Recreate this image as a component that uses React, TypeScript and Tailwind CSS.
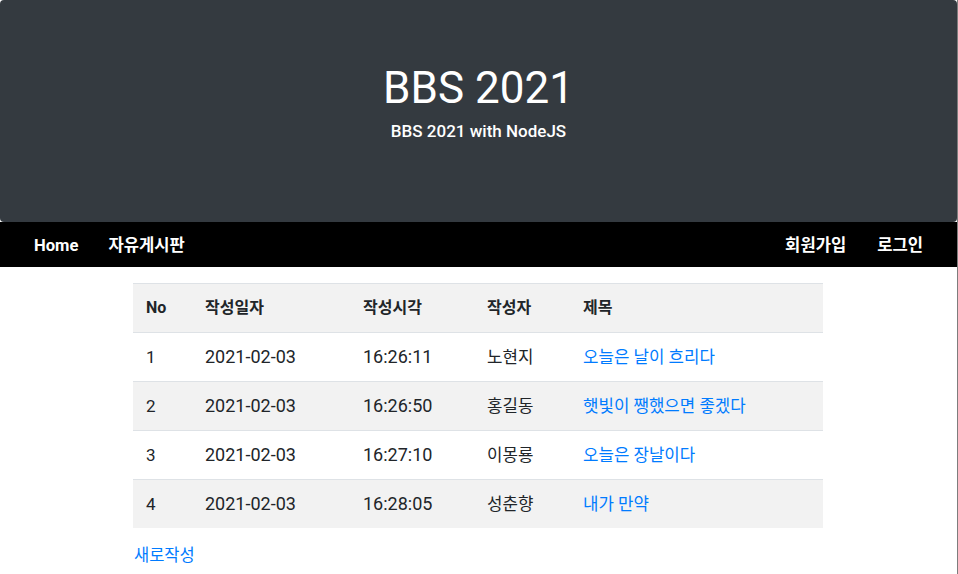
const posts = [
  { no: 1, date: "2021-02-03", time: "16:26:11", writer: "노현지", title: "오늘은 날이 흐리다" },
  { no: 2, date: "2021-02-03", time: "16:26:50", writer: "홍길동", title: "햇빛이 쨍했으면 좋겠다" },
  { no: 3, date: "2021-02-03", time: "16:27:10", writer: "이몽룡", title: "오늘은 장날이다" },
  { no: 4, date: "2021-02-03", time: "16:28:05", writer: "성춘향", title: "내가 만약" },
];

const font = { fontFamily: 'Roboto, "Noto Sans CJK KR", sans-serif' };

export default function App() {
  return (
    <div className="w-[958px] min-h-[574px] bg-white border-r border-[#7d7d7d] text-[#212529]" style={font}>
      {/* Jumbotron */}
      <header className="h-[222px] bg-[#343a40] rounded-[4px] flex flex-col items-center justify-center text-white pb-[18px]">
        <h1 className="text-[44px] leading-[52px] font-normal">BBS 2021</h1>
        <p className="text-[17px] leading-[24px] font-medium mt-[5px]">BBS 2021 with NodeJS</p>
      </header>

      {/* Nav */}
      <nav className="h-[45px] bg-black flex items-center justify-between pl-[34px] pr-[34px] pt-[3px] text-white text-[16.6px] font-bold">
        <div className="flex gap-[30px]">
          <a>Home</a>
          <a>자유게시판</a>
        </div>
        <div className="flex gap-[31px]">
          <a>회원가입</a>
          <a>로그인</a>
        </div>
      </nav>

      {/* Board */}
      <main className="w-[690px] ml-[133px] pt-[16px]">
        <table className="w-full border-collapse text-[16px] leading-[24px]">
          <thead>
            <tr className="bg-[#f2f2f2] border-t border-[#dee2e6] text-left">
              <th className="w-[59px] pl-[13px] py-[12px] font-bold">No</th>
              <th className="w-[158px] pl-[13px] py-[12px] font-bold">작성일자</th>
              <th className="w-[124px] pl-[13px] py-[12px] font-bold">작성시각</th>
              <th className="w-[96px] pl-[13px] py-[12px] font-bold">작성자</th>
              <th className="pl-[13px] py-[12px] font-bold">제목</th>
            </tr>
          </thead>
          <tbody>
            {posts.map((p, i) => (
              <tr key={p.no} className={`border-t border-[#dee2e6] ${i % 2 === 1 ? "bg-[#f2f2f2]" : "bg-white"}`}>
                <td className="pl-[13px] py-[12px] text-[17px]">{p.no}</td>
                <td className="pl-[13px] py-[12px] text-[18px]">{p.date}</td>
                <td className="pl-[13px] py-[12px] text-[18px]">{p.time}</td>
                <td className="pl-[13px] py-[12px] text-[16.8px]">{p.writer}</td>
                <td className="pl-[13px] py-[12px] text-[16.8px]">
                  <a className="text-[#007bff]">{p.title}</a>
                </td>
              </tr>
            ))}
          </tbody>
        </table>
        <div className="pt-[16px] pl-[1px] leading-[24px]">
          <a className="text-[#007bff] text-[16.5px]">새로작성</a>
        </div>
      </main>
    </div>
  );
}
